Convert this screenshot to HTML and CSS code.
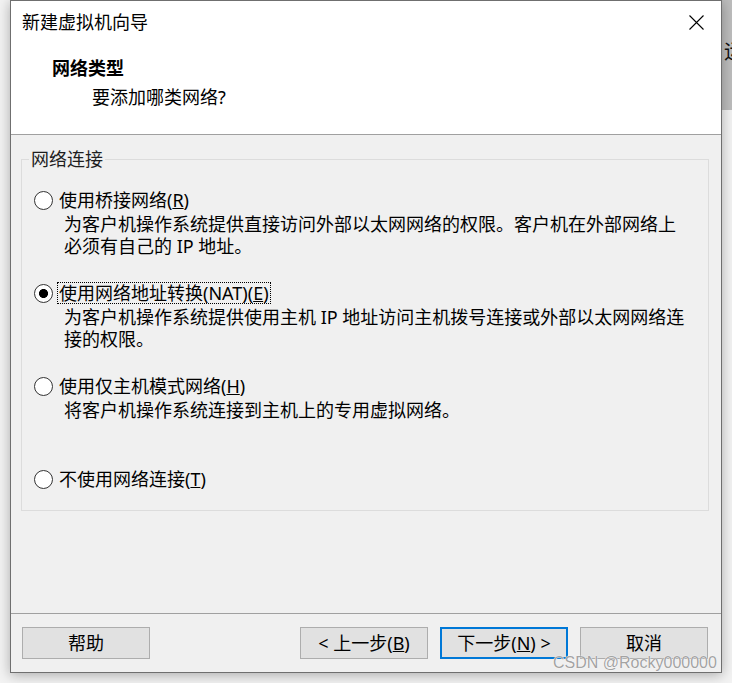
FILE: index.html
```html
<!DOCTYPE html>
<html>
  <head>
    <meta name="viewport" content="width=device-width,initial-scale=1.0">
    <title>新建虚拟机向导</title>
    <link rel="stylesheet" href="styles.css">
  </head>
  <body>
    <div class="desk">
      <div id="wizard" class="dialog">
        <div class="dlg-head">
          <div class="titlebar">
            <span class="dlg-title">新建虚拟机向导</span>
            <button class="close-btn" title="关闭">
              <svg width="15" height="15" viewBox="0 0 15 15">
                <path d="M0.5 0.5 L14.5 14.5 M14.5 0.5 L0.5 14.5" stroke="#000" stroke-width="1.1" fill="none"/>
              </svg>
            </button>
          </div>
          <div class="page-title">网络类型</div>
          <div class="page-sub">要添加哪类网络?</div>
        </div>

        <div class="dlg-body">
          <fieldset class="group">
            <legend>网络连接</legend>

            <div class="option">
              <label class="opt-label">
                <input type="radio" name="net" value="bridged">
                <span class="opt-text">使用桥接网络(<u>R</u>)</span>
              </label>
              <p class="opt-desc">为客户机操作系统提供直接访问外部以太网网络的权限。客户机在外部网络上<br>必须有自己的 IP 地址。</p>
            </div>

            <div class="option">
              <label class="opt-label">
                <input type="radio" name="net" value="nat" checked>
                <span class="opt-text focused">使用网络地址转换(NAT)(<u>E</u>)</span>
              </label>
              <p class="opt-desc">为客户机操作系统提供使用主机 IP 地址访问主机拨号连接或外部以太网网络连<br>接的权限。</p>
            </div>

            <div class="option">
              <label class="opt-label">
                <input type="radio" name="net" value="hostonly">
                <span class="opt-text">使用仅主机模式网络(<u>H</u>)</span>
              </label>
              <p class="opt-desc">将客户机操作系统连接到主机上的专用虚拟网络。</p>
            </div>

            <div class="option last">
              <label class="opt-label">
                <input type="radio" name="net" value="none">
                <span class="opt-text">不使用网络连接(<u>T</u>)</span>
              </label>
            </div>
          </fieldset>
        </div>

        <div class="dlg-foot">
          <button class="btn">帮助</button>
          <div class="foot-right">
            <button class="btn">&lt; 上一步(<u>B</u>)</button>
            <button class="btn default">下一步(<u>N</u>) &gt;</button>
            <button class="btn">取消</button>
          </div>
        </div>
      </div>

      <div class="back-strip">
        <div class="back-app">运</div>
      </div>
    </div>

    <div class="watermark">CSDN @Rocky000000</div>

    <script>
      const labels = document.querySelectorAll('.opt-text');
      document.querySelectorAll('input[name="net"]').forEach((radio, i) => {
        radio.addEventListener('change', () => {
          labels.forEach(l => l.classList.remove('focused'));
          labels[i].classList.add('focused');
        });
      });
    </script>
  </body>
</html>
```

FILE: styles.css
```css
body {
  margin: 0;
  padding: 0;
  height: 683px;
  overflow: hidden;
  background-color: #f3f3f3;
  font-family: 'Noto Sans', 'Noto Sans CJK SC', sans-serif;
  font-size: 18px;
  color: #000;
}

.desk {
  display: flex;
  padding-left: 10px;
}

.dialog {
  position: relative;
  z-index: 1;
  width: 712px;
  box-sizing: border-box;
  border: 1px solid #6f6f6f;
  background-color: #f0f0f0;
  box-shadow: 0 2px 12px rgba(0, 0, 0, 0.3);
}

.dlg-head {
  height: 133px;
  background-color: #fff;
  border-bottom: 1px solid #a0a0a0;
}

.titlebar {
  height: 42px;
  display: flex;
  align-items: center;
  justify-content: space-between;
  padding: 0 17px 0 11px;
}

.dlg-title {
  line-height: 24px;
}

.close-btn {
  border: none;
  background: transparent;
  padding: 0;
  width: 15px;
  height: 15px;
  margin-top: 1px;
  cursor: pointer;
}

.close-btn svg {
  display: block;
}

.page-title {
  margin-top: 13px;
  padding-left: 41px;
  line-height: 24px;
  font-weight: bold;
}

.page-sub {
  margin-top: 5px;
  padding-left: 81px;
  line-height: 24px;
}

.dlg-body {
  height: 478px;
  padding-top: 12px;
  box-sizing: border-box;
}

.group {
  margin: 0 0 0 10px;
  width: 688px;
  box-sizing: border-box;
  padding: 17px 0 19px 12px;
  border: 1px solid #dcdcdc;
}

/* legend sits after the fieldset's left padding, pull it back */
.group legend {
  margin-left: -5px;
  padding: 0 2px;
  line-height: 24px;
  color: #1e1e1e;
}

.option {
  height: 93px;
}

.option.last {
  height: 24px;
}

.opt-label {
  display: flex;
  align-items: center;
  height: 24px;
  gap: 4px;
  cursor: pointer;
}

.opt-label input {
  appearance: none;
  -webkit-appearance: none;
  width: 19px;
  height: 19px;
  margin: 0;
  border: 1px solid #333;
  border-radius: 50%;
  background-color: #fff;
  flex-shrink: 0;
}

.opt-label input:checked {
  background: radial-gradient(circle, #000 0 4.2px, #fff 4.8px);
}

.opt-text {
  padding: 0 1px;
  line-height: 20px;
  border: 1px dotted transparent;
}

.opt-text.focused {
  border-color: #000;
}

.opt-desc {
  margin: 1px 0 0 30px;
  line-height: 22px;
  white-space: nowrap;
}

.dlg-foot {
  height: 59px;
  box-sizing: border-box;
  border-top: 1px solid #a0a0a0;
  display: flex;
  justify-content: space-between;
  align-items: flex-start;
  padding: 13px 13px 0 11px;
}

.foot-right {
  display: flex;
  gap: 12px;
}

.btn {
  width: 128px;
  height: 32px;
  box-sizing: border-box;
  background-color: #e1e1e1;
  border: 1px solid #adadad;
  font-family: 'Noto Sans', 'Noto Sans CJK SC', sans-serif;
  font-size: 18px;
  color: #000;
  padding: 0;
  line-height: 28px;
  cursor: pointer;
}

.btn.default {
  border: 2px solid #0078d7;
}

.back-strip {
  width: 10px;
  overflow: hidden;
}

.back-app {
  height: 110px;
  box-sizing: border-box;
  padding: 40px 0 0 2px;
  background-color: #bdbdbd;
  font-family: 'Noto Sans CJK SC', sans-serif;
  font-size: 20px;
  line-height: 22px;
  white-space: nowrap;
  color: #111;
}

.watermark {
  position: absolute;
  left: 553px;
  top: 654px;
  font-family: 'Liberation Sans', sans-serif;
  font-size: 16px;
  line-height: 18px;
  color: #a3a3a3;
  text-shadow: 0 0 1px #fff, 0 0 1px #fff;
  z-index: 2;
}
```
